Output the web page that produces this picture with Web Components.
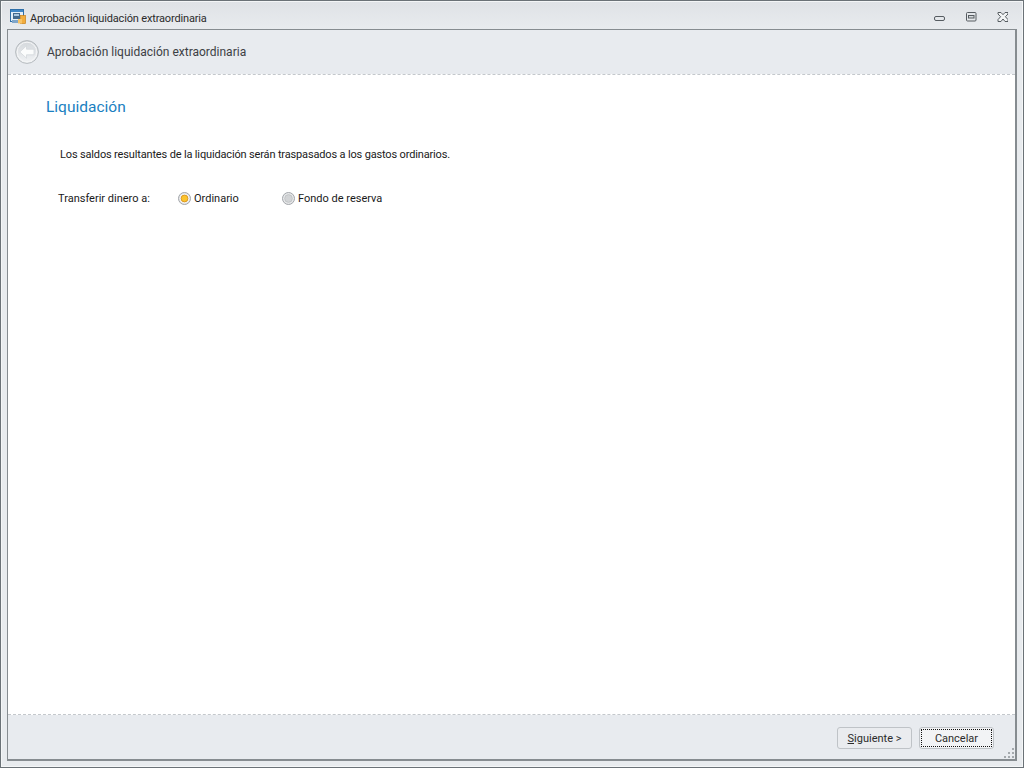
<!DOCTYPE html>
<html>
<head>
<meta charset="utf-8">
<title>Aprobación liquidación extraordinaria</title>
<style>
  html, body { margin: 0; height: 100%; background: #e9ecef; }
  body { font-family: Roboto, "Liberation Sans", sans-serif; font-size: 11px; color: #1a1a1a; }
</style>
</head>
<body>

<wizard-window>
  <back-header slot="header">Aprobación liquidación extraordinaria</back-header>

  <wizard-page title="Liquidación">
    <p class="note">Los saldos resultantes de la liquidación serán traspasados a los gastos ordinarios.</p>
    <radio-row label="Transferir dinero a:">
      <radio-option checked>Ordinario</radio-option>
      <radio-option>Fondo de reserva</radio-option>
    </radio-row>
  </wizard-page>

  <wizard-footer slot="footer">
    <wizard-button><u>S</u>iguiente &gt;</wizard-button>
    <wizard-button focused>Cancelar</wizard-button>
  </wizard-footer>
</wizard-window>

<script>
class WizardWindow extends HTMLElement {
  constructor() {
    super();
    this.attachShadow({ mode: "open" });
    this.shadowRoot.innerHTML = `
      <style>
        :host {
          display: flex;
          flex-direction: column;
          box-sizing: border-box;
          width: 1024px;
          height: 768px;
          border: 1px solid #6b7277;
          box-shadow: inset 0 0 0 1px #f4f6f7;
          background: linear-gradient(#dfe2e6, #e8ebee 28px);
        }
        .title {
          display: flex;
          align-items: center;
          box-sizing: border-box;
          height: 28px;
          flex: none;
          padding: 6px 10px 0 9px;
        }
        .title svg.app { margin-right: 4px; margin-top: -2px; }
        .title span { font-size: 11px; color: #2b2b2b; flex: 1; letter-spacing: -0.16px; }
        .controls { display: flex; gap: 19px; margin: -2px 5px 0 0; align-items: center; }
        .panel {
          flex: 1;
          display: flex;
          flex-direction: column;
          margin: 0 6px 6px 6px;
          border: 2px solid #868c90;
          border-width: 1px 2px 2px 1px;
          background: #e8ebef;
          min-height: 0;
        }
        .body {
          flex: 1;
          background: #fff;
          border-top: 1px dashed #c4c8cc;
          border-bottom: 1px dashed #c4c8cc;
        }
      </style>
      <div class="title">
        <svg class="app" width="16" height="16" viewBox="0 0 16 16">
          <rect x="0.5" y="0.5" width="13" height="12" fill="#e4eef8" stroke="#2f6fa8"/>
          <rect x="1" y="1" width="12" height="2" fill="#3f86c6"/>
          <rect x="3" y="4" width="7" height="6" fill="#44698c"/>
          <rect x="4" y="5" width="5" height="2" fill="#a9c6e0"/>
          <rect x="10.5" y="6.5" width="5" height="8" fill="#f2ad3e" stroke="#c98118" stroke-width="0.7"/>
          <rect x="2" y="11" width="8.5" height="3" fill="#7fa6ca"/>
          <rect x="8" y="10" width="4" height="4.5" fill="#f7c468"/>
        </svg>
        <span>Aprobación liquidación extraordinaria</span>
        <div class="controls">
          <svg width="12" height="12" viewBox="0 0 12 12" fill="none"><rect x="0.5" y="5.5" width="10" height="4" rx="1.5" stroke="#565c61"/></svg>
          <svg width="12" height="12" viewBox="0 0 12 12" fill="none"><rect x="1.5" y="1.5" width="9.5" height="8.5" rx="1" stroke="#565c61"/><rect x="3.5" y="4.5" width="5.5" height="2.5" fill="#d5d9dc" stroke="#565c61"/></svg>
          <svg width="12" height="12" viewBox="0 0 12 12" fill="#f2f4f5" stroke="#565c61" stroke-linejoin="round"><path d="M2 1.5h3L7 3.7 9 1.5h3v1.5L9.4 5.7 12 8.6V10.5H9L7 8 5 10.5H2V8.6L4.6 5.7 2 3z"/></svg>
        </div>
      </div>
      <div class="panel">
        <slot name="header"></slot>
        <div class="body"><slot></slot></div>
        <slot name="footer"></slot>
      </div>
    `;
  }
}
customElements.define("wizard-window", WizardWindow);

class BackHeader extends HTMLElement {
  constructor() {
    super();
    this.attachShadow({ mode: "open" });
    this.shadowRoot.innerHTML = `
      <style>
        :host {
          display: flex;
          align-items: center;
          height: 44px;
          flex: none;
          padding-left: 7px;
          gap: 8px;
          font-size: 12px;
          color: #3c4044;
        }
      </style>
      <svg width="24" height="24" viewBox="0 0 24 24">
        <defs>
          <linearGradient id="g" x1="0" y1="0" x2="0" y2="1"><stop offset="0" stop-color="#d3d7db"/><stop offset="1" stop-color="#f1f3f5"/></linearGradient>
        </defs>
        <circle cx="12" cy="12" r="11.4" fill="url(#g)" stroke="#b5babe"/>
        <circle cx="12" cy="12" r="9.8" fill="none" stroke="#f5f6f7"/>
        <path d="M4.8 12 L11.5 5.8 V9.2 H19 V14.8 H11.5 V18.2 Z" fill="#fbfcfc" stroke="#d0d4d8" stroke-width="0.7" stroke-linejoin="round"/>
      </svg>
      <span><slot></slot></span>
    `;
  }
}
customElements.define("back-header", BackHeader);

class WizardPage extends HTMLElement {
  constructor() {
    super();
    this.attachShadow({ mode: "open" });
    this.shadowRoot.innerHTML = `
      <style>
        :host { display: block; padding: 22px 0 0 38px; }
        h2 {
          margin: 0 0 29px 0;
          font-weight: 400;
          font-size: 15.5px;
          line-height: 21px;
          color: #1a7fc1;
        }
        ::slotted(p) {
          margin: 0 0 27px 14px;
          line-height: 16px;
          letter-spacing: -0.155px;
        }
      </style>
      <h2>${this.getAttribute("title")}</h2>
      <slot></slot>
    `;
  }
}
customElements.define("wizard-page", WizardPage);

class RadioRow extends HTMLElement {
  constructor() {
    super();
    this.attachShadow({ mode: "open" });
    this.shadowRoot.innerHTML = `
      <style>
        :host { display: flex; align-items: center; height: 16px; padding-left: 12px; }
        .label { width: 120px; flex: none; }
        .opts { display: flex; }
      </style>
      <span class="label">${this.getAttribute("label")}</span>
      <div class="opts"><slot></slot></div>
    `;
  }
}
customElements.define("radio-row", RadioRow);

class RadioOption extends HTMLElement {
  constructor() {
    super();
    this.attachShadow({ mode: "open" });
    const on = this.hasAttribute("checked");
    this.shadowRoot.innerHTML = `
      <style>
        :host { display: flex; align-items: center; gap: 3px; width: 104px; white-space: nowrap; }
      </style>
      <svg width="13" height="13" viewBox="0 0 13 13">
        <circle cx="6.5" cy="6.5" r="6" fill="#e6e7e9" stroke="#a2a6aa"/>
        <circle cx="6.5" cy="6.5" r="4.6" fill="#f6f6f7"/>
        <circle cx="6.5" cy="6.5" r="${on ? 3.4 : 3.9}" fill="${on ? "#fbc42e" : "#d2d4d6"}" stroke="${on ? "#dc9a24" : "#b9bcbf"}" stroke-width="${on ? 1 : 0.8}"/>
      </svg>
      <span><slot></slot></span>
    `;
  }
}
customElements.define("radio-option", RadioOption);

class WizardFooter extends HTMLElement {
  constructor() {
    super();
    this.attachShadow({ mode: "open" });
    this.shadowRoot.innerHTML = `
      <style>
        :host {
          display: flex;
          position: relative;
          justify-content: flex-end;
          gap: 7px;
          height: 44px;
          flex: none;
          box-sizing: border-box;
          padding: 12px 21px 0 0;
        }
        svg { position: absolute; right: 0; bottom: 0; }
      </style>
      <slot></slot>
      <svg width="12" height="12" viewBox="0 0 12 12" fill="#a4a9ad">
        <rect x="9" y="1" width="2" height="2"/><rect x="5" y="5" width="2" height="2"/><rect x="9" y="5" width="2" height="2"/>
        <rect x="1" y="9" width="2" height="2"/><rect x="5" y="9" width="2" height="2"/><rect x="9" y="9" width="2" height="2"/>
      </svg>
    `;
  }
}
customElements.define("wizard-footer", WizardFooter);

class WizardButton extends HTMLElement {
  constructor() {
    super();
    this.attachShadow({ mode: "open" });
    this.shadowRoot.innerHTML = `
      <style>
        :host {
          display: flex;
          align-items: center;
          justify-content: center;
          box-sizing: border-box;
          width: 75px;
          height: 22px;
          border: 1px solid #bfc3c7;
          border-radius: 3px;
          background: #eaecef;
          color: #2b2b2b;
        }
        :host([focused]) { background: #f2f3f5; }
        :host([focused]) div { outline: 1px dotted #111; }
        div { display: flex; align-items: center; justify-content: center; width: 69px; height: 16px; }
      </style>
      <div><slot></slot></div>
    `;
  }
}
customElements.define("wizard-button", WizardButton);
</script>
</body>
</html>
